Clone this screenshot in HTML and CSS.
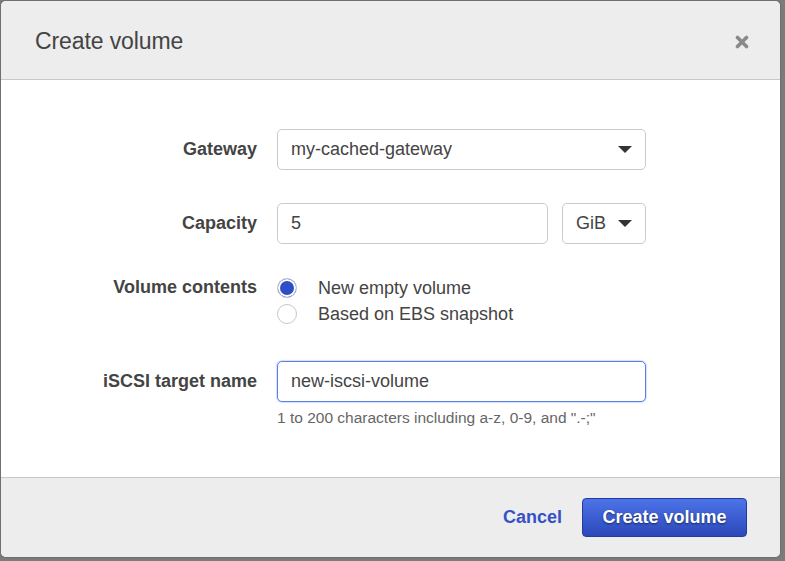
FILE: index.html
```html
<!DOCTYPE html>
<html lang="en">
<head>
<meta charset="utf-8">
<title>Create volume</title>
<link rel="stylesheet" href="styles.css">
</head>
<body>
<div class="backdrop">
  <div class="modal">
    <div class="modal-header">
      <h1 class="modal-title">Create volume</h1>
      <span class="close" aria-label="Close">
        <svg width="14" height="14" viewBox="0 0 14 14"><path d="M2.5 2.5 L11.5 11.5 M11.5 2.5 L2.5 11.5" stroke="#8a8a8a" stroke-width="3.6" stroke-linecap="round" fill="none"/></svg>
      </span>
    </div>
    <div class="modal-body">
      <div class="row">
        <div class="label">Gateway</div>
        <div class="control">
          <div class="field select full"><span>my-cached-gateway</span><i class="caret"></i></div>
        </div>
      </div>
      <div class="row row-cap">
        <div class="label">Capacity</div>
        <div class="control split">
          <div class="field input grow"><span>5</span></div>
          <div class="field select unit"><span>GiB</span><i class="caret"></i></div>
        </div>
      </div>
      <div class="row row-radio">
        <div class="label">Volume contents</div>
        <div class="control radios">
          <div class="radio-line"><span class="radio checked"></span><span>New empty volume</span></div>
          <div class="radio-line"><span class="radio"></span><span>Based on EBS snapshot</span></div>
        </div>
      </div>
      <div class="row row-name">
        <div class="label">iSCSI target name</div>
        <div class="control">
          <div class="field input focus full"><span>new-iscsi-volume</span></div>
          <div class="hint">1 to 200 characters including a-z, 0-9, and ".-;"</div>
        </div>
      </div>
    </div>
    <div class="modal-footer">
      <a class="cancel" href="#">Cancel</a>
      <button class="primary" type="button">Create volume</button>
    </div>
  </div>
</div>
</body>
</html>
```
FILE: styles.css
```css
html, body {
  margin: 0;
  padding: 0;
}
body {
  background: #7b7b7b;
  font-family: "Liberation Sans", Arial, sans-serif;
  color: #444;
  width: 785px;
  height: 561px;
  overflow: hidden;
}
.backdrop {
  padding: 1px 4px 4px 1px;
}
.modal {
  width: 779px;
  height: 556px;
  background: #fff;
  border-radius: 5px;
  overflow: hidden;
  display: flex;
  flex-direction: column;
  box-shadow: 0 0 2px rgba(0,0,0,0.35);
}
.modal-header {
  height: 78px;
  flex: none;
  background: #ededed;
  border-bottom: 1px solid #c9c9c9;
  display: flex;
  align-items: center;
  justify-content: space-between;
  padding: 0 31px 0 34px;
}
.modal-title {
  margin: 2px 0 0 0;
  font-weight: normal;
  font-size: 23px;
  color: #444;
  letter-spacing: -0.1px;
}
.close {
  display: flex;
  width: 14px;
  height: 14px;
  margin-top: 4px;
}
.modal-body {
  flex: 1;
  padding-top: 49px;
  font-size: 18px;
}
.row {
  display: grid;
  grid-template-columns: 256px 369px;
  column-gap: 20px;
  align-items: start;
}
.label {
  text-align: right;
  font-weight: bold;
  color: #444;
  line-height: 41px;
}
.field {
  height: 39px;
  border: 1px solid #cacaca;
  border-radius: 5px;
  background: #fff;
  display: flex;
  align-items: center;
  padding: 0 13px;
  box-sizing: content-box;
  color: #444;
  font-size: 18px;
}
.select { justify-content: space-between; }
.caret {
  width: 0;
  height: 0;
  border-left: 7px solid transparent;
  border-right: 7px solid transparent;
  border-top: 7px solid #333;
}
.row-cap { margin-top: 33px; }
.split {
  display: flex;
  gap: 14px;
}
.grow { flex: 1; }
.unit {
  width: 56px;
  flex: none;
}
.row-radio { margin-top: 34px; }
.row-radio .label { line-height: 20px; margin-top: -1px; }
.radios {
  display: flex;
  flex-direction: column;
  gap: 6px;
}
.radio-line {
  display: flex;
  align-items: center;
  gap: 21px;
  height: 20px;
  color: #444;
}
.radio {
  width: 18px;
  height: 18px;
  border: 1px solid #c8c8c8;
  border-radius: 50%;
  background: #fff;
  flex: none;
}
.radio.checked {
  background: #2f4ec6;
  box-shadow: inset 0 0 0 2px #fff;
}
.row-name { margin-top: 37px; }
.field.focus {
  border-color: #5a80e6;
  box-shadow: 0 0 1px 1px rgba(90,128,230,0.25);
}
.hint {
  font-size: 15.5px;
  color: #666;
  margin-top: 7px;
}
.modal-footer {
  height: 79px;
  flex: none;
  background: #ededed;
  border-top: 1px solid #c9c9c9;
  display: flex;
  align-items: center;
  justify-content: flex-end;
  gap: 20px;
  padding-right: 33px;
}
.cancel {
  color: #3452c6;
  font-weight: bold;
  font-size: 18px;
  text-decoration: none;
}
.primary {
  width: 165px;
  height: 39px;
  border: 1px solid #223c9e;
  border-radius: 4px;
  background: linear-gradient(#4c74e8, #2c48ba);
  color: #fff;
  font-family: "Liberation Sans", Arial, sans-serif;
  font-weight: bold;
  font-size: 18px;
  text-shadow: 0 1px 2px rgba(0,0,0,0.55);
  padding: 0;
  cursor: pointer;
}
```
